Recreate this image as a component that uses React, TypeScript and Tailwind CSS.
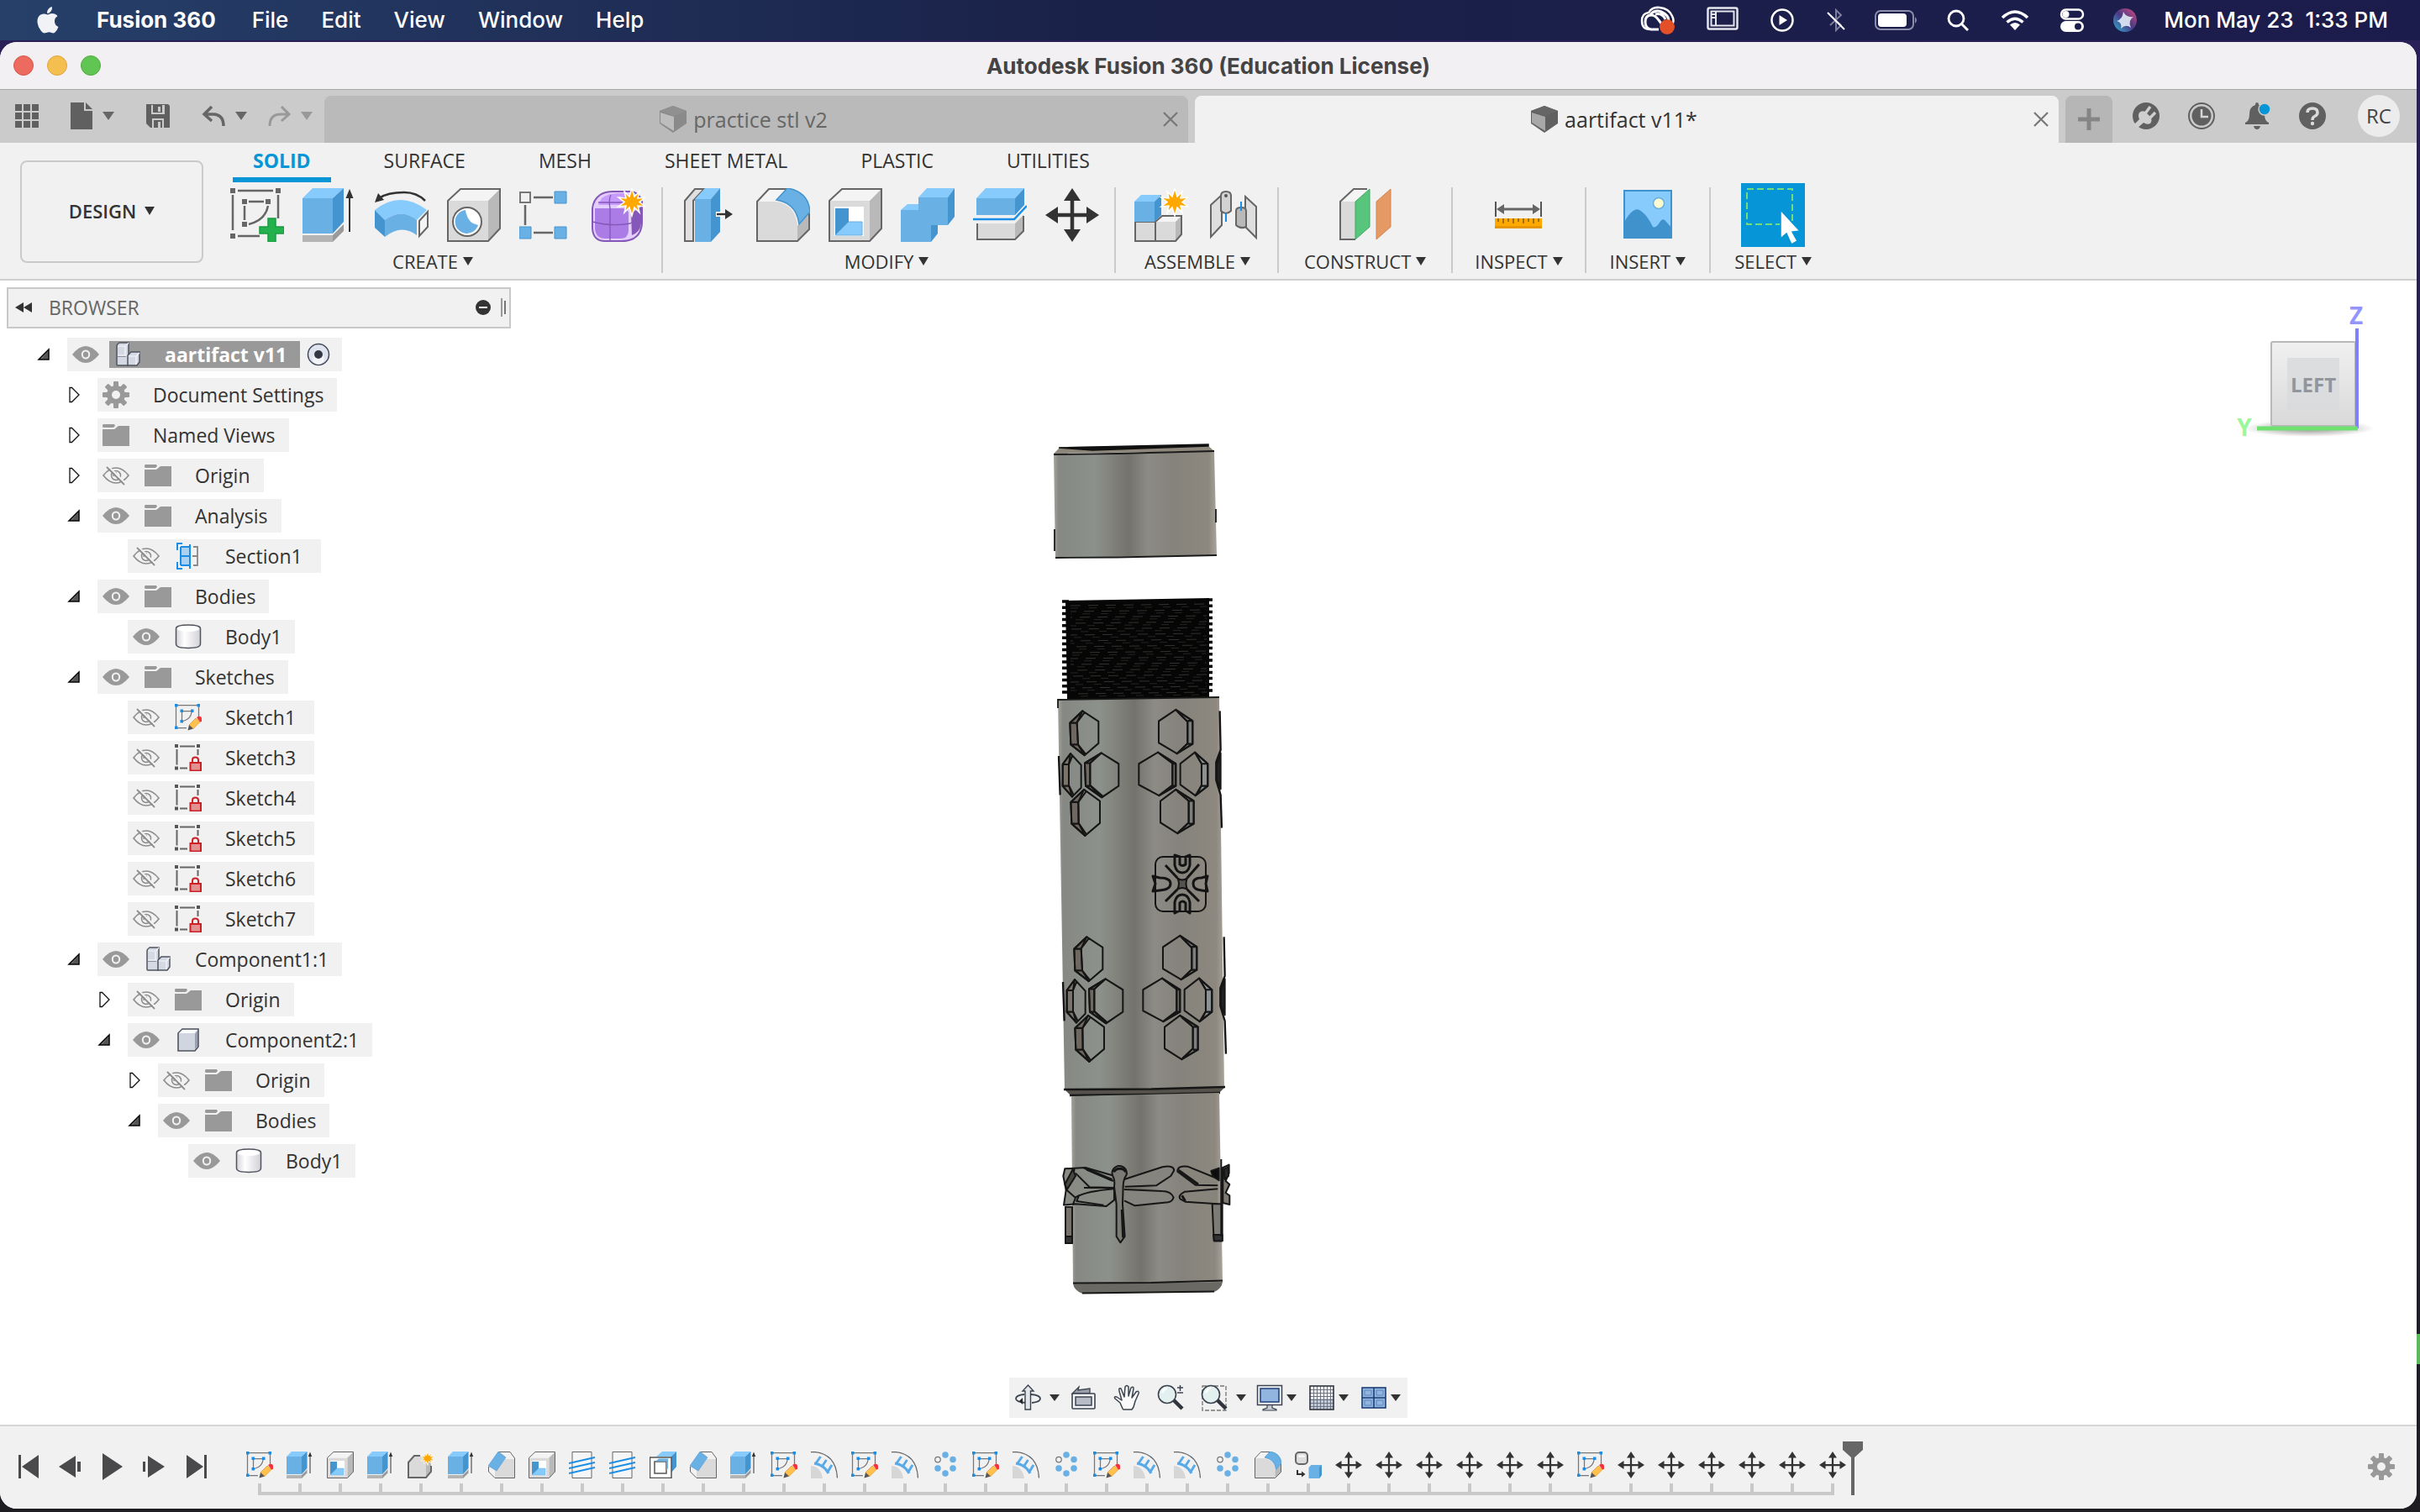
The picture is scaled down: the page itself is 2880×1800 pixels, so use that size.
import React from "react";

type P = { className?: string };
type IconFn = (p: P) => React.ReactElement;

const BL = "#87cafc";
const BM = "#69b0e4";
const BD = "#4494cf";
const GF = "#dadada";
const GT = "#f4f4f4";
const GS = "#b9b9b9";
const GK = "#666666";

function Svg({ vb = "0 0 64 64", className = "size-16", children }: { vb?: string; className?: string; children: React.ReactNode }) {
  return (
    <svg viewBox={vb} className={`${className} block shrink-0`} fill="none" aria-hidden="true">
      {children}
    </svg>
  );
}

function Caret({ className = "h-2.5 w-3 text-[#333]" }: P) {
  return (
    <svg viewBox="0 0 12 10" className={`${className} block shrink-0`} preserveAspectRatio="none" aria-hidden="true">
      <path d="M0 0H12L6 10Z" fill="currentColor" />
    </svg>
  );
}

const STAR = "M48 0 51 10 57 4 55 12 64 11 57 16.500 64 22 55 21 57 29 51 23 48 33 45 23 39 29 41 21 32 22 39 16.500 32 11 41 12 39 4 45 10Z";
const Star = () => <path d={STAR} fill="#ffa800" stroke="#fff" strokeWidth="1.500" />;

/* ---------- modelling icons, drawn on a 64 unit grid ---------- */

const NewSketch: IconFn = ({ className }) => (
  <Svg className={className}>
    <g fill="#666">
      <path d="M0 0h6v6H0zM54 0h6v6h-6zM0 54h6v6H0zM14 13h6v6h-6zM42 13h6v6h-6zM14 40h6v6h-6z" />
    </g>
    <path d="M9 3H51M3 8V50M57 8V36M9 57H35M22 16H40M17 21V38M45 21Q42 38 22 43" stroke="#666" strokeWidth="2.500" />
    <path d="M45 36h9v10h10v8H54v10h-9V54H35v-8h10z" fill="#22b14c" stroke="#1a9a40" strokeWidth="1.500" />
  </Svg>
);

const Extrude: IconFn = ({ className }) => (
  <Svg className={className}>
    <path d="M0 12H36V54H0Z" fill={BM} />
    <path d="M0 12 12 0H49L36 12Z" fill={BL} />
    <path d="M36 12 49 0V40L36 54Z" fill={BD} />
    <path d="M0 56H36V64H0Z" fill="#b4b4b4" />
    <path d="M36 56 49 43V51L36 64Z" fill="#9a9a9a" />
    <path d="M56 8V52" stroke="#333" strokeWidth="2" />
    <path d="M56 1 60.500 12H51.500Z" fill="#333" />
  </Svg>
);

const Revolve: IconFn = ({ className }) => (
  <Svg className={className}>
    <path d="M60 15Q50 5 35 5Q15 5 5 12" stroke="#333" strokeWidth="2.500" />
    <path d="M0 17 4 6 11 14Z" fill="#333" />
    <path d="M0 26Q30 2 62 26L50 38Q32 23 12 38Z" fill={BL} />
    <path d="M0 26 12 38V58L0 47Z" fill={BD} />
    <path d="M12 38Q32 23 50 38V56Q32 42 12 58Z" fill={BM} />
    <path d="M53 39 63 28V46L53 57Z" fill="#f4f4f4" stroke={GK} strokeWidth="2" />
  </Svg>
);

const Box = () => (
  <>
    <path d="M1 15H49V63H1Z" fill={GF} />
    <path d="M1 15 16 1H63L49 15Z" fill={GT} />
    <path d="M49 15 63 1V48L49 63Z" fill={GS} />
    <path d="M1 15 16 1H63V48L49 63H1Z" stroke={GK} strokeWidth="2" />
  </>
);

const Hole: IconFn = ({ className }) => (
  <Svg className={className}>
    <Box />
    <circle cx="24" cy="40" r="17" fill="#fff" stroke={GK} strokeWidth="2" />
    <path d="M22 26A14 14 0 1 0 37 44Q24 42 22 26Z" fill={BM} />
  </Svg>
);

const Pattern: IconFn = ({ className }) => (
  <Svg vb="4 0 64 64" className={className}>
    <path d="M5 5H17V17H5Z" stroke="#777" strokeWidth="2" />
    <path d="M46 4h14v14H46zM4 46h14v14H4zM46 46h14v14H46z" fill={BM} stroke={BD} strokeWidth="1" />
    <path d="M21 11H44M21 53H44M11 20V44" stroke="#666" strokeWidth="2.500" />
  </Svg>
);

const FormTool: IconFn = ({ className }) => (
  <Svg className={className}>
    <path d="M1 24Q2 14 10 8Q16 4 26 4H46Q56 4 60 16L60 40Q60 54 50 60Q44 63 36 63H16Q2 63 1 48Z" fill="#e3cdfb" stroke="#8457b8" strokeWidth="2" />
    <path d="M12 12Q20 5 38 6L50 9 44 20H8Z" fill="#c79bfb" />
    <path d="M4 24H38Q44 24 44 32V50Q44 60 34 60H16Q5 60 4 48Z" fill="#ab7be6" />
    <path d="M47 30 59 22V42Q58 52 48 56Z" fill="#8457b8" />
    <path d="M23 8Q20 14 22 24V62M1 40Q24 46 46 42L60 34M8 17H48" stroke="#8457b8" strokeWidth="1.300" />
    <Star />
  </Svg>
);

const PressPull: IconFn = ({ className }) => (
  <Svg className={className}>
    <path d="M1 15 13 1H24L11 15V63H1Z" fill="#e0e0e0" stroke={GK} strokeWidth="2" />
    <path d="M13 13H32V64H13Z" fill={BM} />
    <path d="M13 13 25 0H43L32 13Z" fill={BL} />
    <path d="M32 13 43 0V52L32 64Z" fill={BD} />
    <path d="M38 31H49" stroke="#fff" strokeWidth="6" />
    <path d="M39 31H50" stroke="#333" strokeWidth="2.500" />
    <path d="M49 25 58 31 49 37Z" fill="#333" />
  </Svg>
);

const Fillet: IconFn = ({ className }) => (
  <Svg className={className}>
    <path d="M1 16H22Q46 18 49 45V63H1Z" fill={GF} />
    <path d="M1 16 15 1H37L24 16Z" fill={GT} />
    <path d="M49 45 63 30V49L49 63Z" fill={GS} />
    <path d="M37 1H15L1 16V63H49L63 49V30" stroke={GK} strokeWidth="2" />
    <path d="M37 0Q62 4 64 28L51 43Q48 18 24 14Z" fill={BM} stroke={BD} strokeWidth="1.500" />
  </Svg>
);

const Shell: IconFn = ({ className }) => (
  <Svg className={className}>
    <Box />
    <path d="M7 22H42V57H7Z" fill="#fff" />
    <path d="M8 24H24V42L8 56Z" fill={BD} />
    <path d="M24 40H40V56H8Z" fill={BL} stroke={BM} strokeWidth="1" />
  </Svg>
);

const Combine: IconFn = ({ className }) => (
  <Svg className={className}>
    <path d="M0 26H21V11H56V44H36V64H0Z" fill={BM} />
    <path d="M21 11 31 0H64L56 11ZM0 26 8 19H21V26Z" fill={BL} />
    <path d="M56 11 64 0V34L56 44ZM36 64V44H44V54Z" fill={BD} />
  </Svg>
);

const Split: IconFn = ({ className }) => (
  <Svg className={className}>
    <path d="M4 12H50V32H4Z" fill={BM} />
    <path d="M4 12 15 0H61L50 12Z" fill={BL} />
    <path d="M50 12 61 0V20L50 32Z" fill={BD} />
    <path d="M0 37H49L64 21" stroke="#1a8ee6" strokeWidth="2.500" />
    <path d="M5 42H50V61H5Z" fill={GF} />
    <path d="M50 42 60 32V51L50 61Z" fill={GS} />
    <path d="M5 42V61H50L60 51V33" stroke={GK} strokeWidth="2" />
  </Svg>
);

const Move: IconFn = ({ className }) => (
  <Svg className={className}>
    <path d="M32 10V54M10 32H54" stroke="#333" strokeWidth="4.500" />
    <path d="M32 0 42 15H22ZM32 64 42 49H22ZM0 32 15 22V42ZM64 32 49 22V42Z" fill="#333" />
  </Svg>
);

const NewComponent: IconFn = ({ className }) => (
  <Svg className={className}>
    <path d="M1 40H25V63H1Z" fill={GF} stroke={GK} strokeWidth="2" />
    <path d="M25 40 33 33H56L49 40Z" fill={GT} />
    <path d="M25 40H49V63H25Z" fill={GF} />
    <path d="M49 40 56 33V55L49 63Z" fill={GS} />
    <path d="M25 40 33 33H56V55L49 63H25Z" stroke={GK} strokeWidth="2" />
    <path d="M0 16H24V40H0Z" fill={BM} />
    <path d="M0 16 8 8H32L24 16Z" fill={BL} />
    <path d="M24 16 32 8V32L24 40Z" fill={BD} />
    <Star />
  </Svg>
);

const Joint: IconFn = ({ className }) => (
  <Svg className={className}>
    <path d="M5 20 18 8V44L5 58Z" fill="#dedede" stroke={GK} strokeWidth="2" />
    <path d="M17 9Q17 4 23 4T29 9V27Q26 30 23 30T17 27Z" fill="#d2d2d2" stroke={GK} strokeWidth="2" />
    <circle cx="23" cy="9" r="2" fill="#555" />
    <path d="M23 30V40M41 16V26" stroke="#1a8ee6" strokeWidth="2" />
    <path d="M46 10 59 22V59L46 46Z" fill="#dedede" stroke={GK} strokeWidth="2" />
    <path d="M35 27Q35 23 41 23T47 27V46Q40 49 35 44Z" fill="#b9b9b9" stroke={GK} strokeWidth="2" />
    <path d="M41 16V27" stroke="#1a8ee6" strokeWidth="2" />
  </Svg>
);

const Construct: IconFn = ({ className }) => (
  <Svg className={className}>
    <path d="M2 16H20V61H2Z" fill={GF} />
    <path d="M2 16 18 1H37L20 16Z" fill={GT} />
    <path d="M34 1H18L2 16V61H20" stroke={GK} strokeWidth="2" />
    <path d="M20 16 37 1V46L20 61Z" fill="#57c67c" stroke="#3da862" strokeWidth="1" />
    <path d="M45 16 62 1V46L45 61Z" fill="#e59a66" stroke="#d2844e" strokeWidth="1" />
  </Svg>
);

const Measure: IconFn = ({ className }) => (
  <Svg className={className}>
    <path d="M5 16V34M59 16V34" stroke="#555" strokeWidth="2" />
    <path d="M10 25H54" stroke="#666" strokeWidth="3" />
    <path d="M6 25 15 19V31ZM58 25 49 19V31Z" fill="#666" />
    <path d="M4 36H60V48H4Z" fill="#ffa800" />
    <path d="M4 45H60V48H4Z" fill="#e59600" />
    <path d="M8 36v4M14 36v6M20 36v4M26 36v6M32 36v4M38 36v6M44 36v4M50 36v6M56 36v4" stroke="#6b5320" strokeWidth="1.300" />
  </Svg>
);

const InsertPic: IconFn = ({ className }) => (
  <Svg className={className}>
    <path d="M3 2H61V60H3Z" fill={BL} />
    <path d="M3 42Q14 22 22 26T38 46Q42 48 46 41T54 40L61 48V60H3Z" fill="#3f92cc" />
    <circle cx="45" cy="18" r="6.500" fill="#fffbd0" stroke="#6aaede" strokeWidth="1.500" />
    <path d="M4 3H60V59H4Z" stroke="#3f92cc" strokeWidth="2" />
  </Svg>
);

const SelectTool: IconFn = () => (
  <Svg vb="0 0 76 76" className="-my-1.5 size-[76px]">
    <path d="M0 0H76V76H0Z" fill="#0696d7" />
    <path d="M7 7H61V49H7Z" stroke="#73dd7b" strokeWidth="2" strokeDasharray="8 4" />
    <path d="M47 32 70 57 61 58 67 69 60 73 54 60 47 66Z" fill="#fff" stroke="#0696d7" strokeWidth="1.500" />
  </Svg>
);

/* ---------- timeline only icons ---------- */

const SketchEdit: IconFn = ({ className }) => (
  <Svg className={className}>
    <path d="M3 3H57M3 3V57M57 3V34M3 57H28M17 17H41M17 17V41M40 20Q38 36 20 41" stroke="#777" strokeWidth="2.500" />
    <path d="M0 0h7v7H0zM53 0h7v7h-7zM0 53h7v7H0zM13 13h7v7h-7zM38 13h7v7h-7zM13 38h7v7h-7z" fill="#1a8ee6" />
    <path d="M34 50 50 34 60 43 44 59Z" fill="#ffc04d" stroke="#d99a2b" strokeWidth="1.500" />
    <path d="M34 50 44 59 31 63Z" fill="#555" />
    <path d="M52 32Q62 26 64 34T60 43Z" fill="#f5323c" />
  </Svg>
);

const SketchLocked: IconFn = ({ className }) => (
  <Svg className={className}>
    <path d="M0 0h8v8H0zM52 0h8v8h-8zM0 53h8v8H0z" fill="#555" />
    <path d="M12 5H48M5 12V49M55 12V26M12 57H30" stroke="#666" strokeWidth="4" />
    <path d="M42 43V37Q42 31 49 31T56 37V43" stroke="#cc2026" strokeWidth="4" />
    <path d="M37 44H62V63H37Z" fill="#e39091" stroke="#cc2026" strokeWidth="4" />
  </Svg>
);

const BaseFeature: IconFn = ({ className }) => (
  <Svg className={className}>
    <path d="M2 26 16 10H46L56 22V48L44 62H2Z" fill={GF} />
    <path d="M44 30 56 20V48L44 62Z" fill={GS} />
    <path d="M30 10H16L2 26V62H44L56 48V34" stroke={GK} strokeWidth="4" />
    <Star />
  </Svg>
);

const Chamfer: IconFn = ({ className }) => (
  <Svg className={className}>
    <path d="M1 36V48L16 63H63V16L52 1H26" fill="#f2f2f2" stroke={GK} strokeWidth="2" />
    <path d="M40 18H62V62H16V44Z" fill={GF} />
    <path d="M24 0 42 14 20 46 0 34Z" fill={BM} stroke={BD} strokeWidth="1" />
  </Svg>
);

const Thread: IconFn = ({ className }) => (
  <Svg className={className}>
    <path d="M8 1H54V63H8Z" fill="#f6f6f6" stroke={GK} strokeWidth="2" />
    <path d="M0 28 62 14M0 40 62 26M0 52 62 38" stroke="#1a8ee6" strokeWidth="4" />
  </Svg>
);

const Scale: IconFn = ({ className }) => (
  <Svg className={className}>
    <path d="M16 12 30 0H64L54 12Z" fill={BL} />
    <path d="M52 12 64 0V36L52 50Z" fill={BD} />
    <path d="M1 14H52V63H1Z" fill="#fff" stroke="#555" strokeWidth="3" />
    <path d="M12 24H40V52H12Z" fill="#fff" stroke="#555" strokeWidth="3" />
    <path d="M14 23 22 17H44V40L40 46V24Z" fill={BM} />
  </Svg>
);

const Emboss: IconFn = ({ className }) => (
  <Svg className={className}>
    <path d="M0 1H8Q60 6 63 63" stroke="#666" strokeWidth="2.500" />
    <path d="M0 34Q24 36 28 64H0Z" fill="#d6d6d6" />
    <path d="M8 28Q32 32 42 52M10 31 23 12M25 38 37 20M39 50 50 32" stroke="#5aaae8" strokeWidth="6" />
  </Svg>
);

const CircPattern: IconFn = ({ className }) => (
  <Svg className={className}>
    <g fill={BM}>
      <circle cx="32" cy="8" r="7.500" />
      <circle cx="50" cy="19" r="7.500" />
      <circle cx="50" cy="40" r="7.500" />
      <circle cx="32" cy="52" r="7.500" />
      <circle cx="14" cy="40" r="7.500" />
    </g>
    <circle cx="14" cy="19" r="6.500" stroke="#777" strokeWidth="2.500" />
  </Svg>
);

const Convert: IconFn = ({ className }) => (
  <Svg className={className}>
    <rect x="2" y="2" width="28" height="28" rx="8" fill="#ddd" stroke="#666" strokeWidth="4" />
    <path d="M8 11H24" stroke="#f8f8f8" strokeWidth="5" />
    <path d="M6 44V54H18" stroke="#333" strokeWidth="4" />
    <path d="M16 47 25 54 16 61Z" fill="#333" />
    <path d="M33 38 39 32H64V56L58 64H33Z" fill={BM} />
    <path d="M58 38 64 32V56L58 64Z" fill={BD} />
  </Svg>
);

/* ---------- browser tree icons (32 unit grid) ---------- */

const Eye: IconFn = () => (
  <Svg vb="0 0 32 32" className="size-8">
    <path d="M0 16Q8 6 16 6T32 16Q24 26 16 26T0 16Z" fill="#999" />
    <ellipse cx="16" cy="16" rx="4.200" ry="4.600" stroke="#f2f2f2" strokeWidth="2" />
  </Svg>
);
const EyeOff: IconFn = () => (
  <Svg vb="0 0 32 32" className="size-8">
    <path d="M1 16Q8 7 16 7T31 16Q24 25 16 25T1 16Z" stroke="#8c8c8c" strokeWidth="1.600" />
    <circle cx="16" cy="16" r="5.500" stroke="#8c8c8c" strokeWidth="1.500" />
    <path d="M13 17Q13 13 17 13" stroke="#8c8c8c" strokeWidth="1.500" />
    <path d="M7 5 28 26" stroke="#f2f2f2" strokeWidth="2" />
    <path d="M5 6 26 27" stroke="#8c8c8c" strokeWidth="1.800" />
  </Svg>
);
const Folder: IconFn = () => (
  <Svg vb="0 0 32 32" className="size-8">
    <path d="M1 3H14L15 5 13 7H1Q0 7 0 5T1 3Z" fill="#999" />
    <path d="M0 9H14L19 5H32V29H0Z" fill="#999" />
  </Svg>
);
function Gear({ className = "size-8 text-[#999]" }: P) {
  return (
    <Svg vb="0 0 32 32" className={className}>
      <g fill="currentColor">
        {[0, 45, 90, 135].map((a) => (
          <rect key={a} x="13" y="0" width="6" height="32" rx="1" transform={`rotate(${a} 16 16)`} />
        ))}
      </g>
      <circle cx="16" cy="16" r="8" stroke="currentColor" strokeWidth="6" />
      <circle cx="16" cy="16" r="5" fill="#f2f2f2" />
    </Svg>
  );
}
const Assembly: IconFn = () => (
  <Svg vb="0 0 32 32" className="size-8">
    <path d="M3 6Q3 4 6 2H17V27Q17 29 16 29H4Q3 29 3 28Z" fill="#d5d9e3" stroke="#50545f" strokeWidth="1.500" />
    <path d="M16 17 20 13H30V25L27 29H16Z" fill="#d5d9e3" stroke="#50545f" strokeWidth="1.500" />
    <path d="M4 6H13V17M4 17H15M14 6 17 2M17 18H26V28M26 18 30 14" stroke="#f7f8fb" strokeWidth="1.200" />
    <path d="M4 18.500H14" stroke="#8a90a0" strokeWidth="1" />
  </Svg>
);
const Cube: IconFn = () => (
  <Svg vb="0 0 32 32" className="size-8">
    <path d="M4 8 9 3H28V24L24 29H4Z" fill="#d1d5df" stroke="#50545f" strokeWidth="1.600" />
    <path d="M5 8H23L27 4H9Z" fill="#fafbfd" />
    <path d="M24 9 27 5V24L24 27Z" fill="#9aa0b0" />
  </Svg>
);
const Body: IconFn = () => (
  <Svg vb="0 0 32 32" className="size-8">
    <defs>
      <linearGradient id="cyl" x1="0" x2="1">
        <stop offset="0" stopColor="#d5d5d9" />
        <stop offset="0.350" stopColor="#ffffff" />
        <stop offset="1" stopColor="#d0d0d6" />
      </linearGradient>
    </defs>
    <path d="M1.500 6Q2 2 16 2T30.500 6V25Q30 29.500 16 29.500T1.500 25Z" fill="url(#cyl)" stroke="#50545f" strokeWidth="1.500" />
    <path d="M2.500 7Q3 3 16 3T29.500 7Q26 10 16 10T2.500 7Z" fill="#fff" />
  </Svg>
);
const Section: IconFn = () => (
  <Svg vb="0 0 32 32" className="size-8">
    <path d="M6 5H17V27H6Z" fill="#a9d1f2" />
    <path d="M18 2V31M7 5V27M7 5H18M7 16H18M7 27H18" stroke="#1a8ee6" strokeWidth="2" />
    <path d="M3 9V1H9M3 23V31H9" stroke="#1a8ee6" strokeWidth="2" />
    <path d="M22 5H27V27H22M21 16H27" stroke="#888" strokeWidth="1.800" />
  </Svg>
);
const Sk32: IconFn = () => <SketchEdit className="size-8" />;
const Lock32: IconFn = () => <SketchLocked className="size-8" />;

type Row = { lvl: 0 | 1 | 2 | 3 | 4; tw?: "open" | "shut"; eye?: "on" | "off"; roomy?: boolean; Icon: IconFn; text: string };

const G32: IconFn = () => <Gear />;

const ROWS: Row[] = [
  { lvl: 1, tw: "shut", Icon: G32, text: "Document Settings" },
  { lvl: 1, tw: "shut", Icon: Folder, text: "Named Views" },
  { lvl: 1, tw: "shut", eye: "off", Icon: Folder, text: "Origin" },
  { lvl: 1, tw: "open", eye: "on", Icon: Folder, text: "Analysis" },
  { lvl: 2, eye: "off", roomy: true, Icon: Section, text: "Section1" },
  { lvl: 1, tw: "open", eye: "on", Icon: Folder, text: "Bodies" },
  { lvl: 2, eye: "on", Icon: Body, text: "Body1" },
  { lvl: 1, tw: "open", eye: "on", Icon: Folder, text: "Sketches" },
  { lvl: 2, eye: "off", roomy: true, Icon: Sk32, text: "Sketch1" },
  { lvl: 2, eye: "off", roomy: true, Icon: Lock32, text: "Sketch3" },
  { lvl: 2, eye: "off", roomy: true, Icon: Lock32, text: "Sketch4" },
  { lvl: 2, eye: "off", roomy: true, Icon: Lock32, text: "Sketch5" },
  { lvl: 2, eye: "off", roomy: true, Icon: Lock32, text: "Sketch6" },
  { lvl: 2, eye: "off", roomy: true, Icon: Lock32, text: "Sketch7" },
  { lvl: 1, tw: "open", eye: "on", Icon: Assembly, text: "Component1:1" },
  { lvl: 2, tw: "shut", eye: "off", Icon: Folder, text: "Origin" },
  { lvl: 2, tw: "open", eye: "on", Icon: Cube, text: "Component2:1" },
  { lvl: 3, tw: "shut", eye: "off", Icon: Folder, text: "Origin" },
  { lvl: 3, tw: "open", eye: "on", Icon: Folder, text: "Bodies" },
  { lvl: 4, eye: "on", Icon: Body, text: "Body1" },
];

const INDENT = ["pl-9", "pl-18", "pl-27", "pl-36", "pl-45"];

function Twisty({ state }: { state?: "open" | "shut" }) {
  if (!state) return <span className="w-4 shrink-0" />;
  return (
    <button aria-label={state === "open" ? "Collapse" : "Expand"} className="w-4 shrink-0">
      {state === "open" ? (
        <Svg vb="0 0 16 20" className="h-5 w-4">
          <path d="M2 16 14 4V16Z" fill="#777" stroke="#000" strokeWidth="1.500" />
          <path d="M13 6V15H6Z" fill="#555" />
        </Svg>
      ) : (
        <Svg vb="0 0 16 20" className="h-5 w-4">
          <path d="M3 1.500H5.500L14 10 5.500 18.500H3Z" fill="#fff" stroke="#111" strokeWidth="1.300" />
        </Svg>
      )}
    </button>
  );
}

function Browser() {
  return (
    <section aria-label="Browser" className="absolute top-2 left-2 w-150 text-[23px] leading-8 text-[#333]">
      <header className="flex h-[49px] items-center border-2 border-[#c8c8c8] bg-[#f1f1f1] pr-1 pb-0.5 pl-2">
        <button aria-label="Collapse panel">
          <Svg vb="0 0 20 12" className="h-3 w-5">
            <path d="M0 6 10 0V12ZM10 6 20 0V12Z" fill="#333" />
          </Svg>
        </button>
        <h2 className="ml-5 flex-1 text-[#666]">BROWSER</h2>
        <button aria-label="Hide" className="mr-3">
          <Svg vb="0 0 18 18" className="size-[18px]">
            <circle cx="9" cy="9" r="9" fill="#333" />
            <path d="M4 9H14" stroke="#fff" strokeWidth="2" />
          </Svg>
        </button>
        <span className="flex items-center gap-0.5">
          <i className="h-[22px] w-0.5 bg-[#999]" />
          <i className="h-4 w-0.5 bg-[#777]" />
        </span>
      </header>
      <ul className="mt-[11px] flex flex-col gap-2">
        <li className="flex items-center gap-5 pl-9">
          <Twisty state="open" />
          <div className="flex h-10 items-center bg-[#f1f1f1] pr-3 pl-1.5">
            <button aria-label="Toggle visibility">
              <Eye />
            </button>
            <div className="ml-3 flex items-center gap-7 bg-[#999] pr-4 pl-1.5 font-bold text-white">
              <Assembly />
              <span>aartifact v11</span>
            </div>
            <label className="ml-1.5 block">
              <input type="radio" name="active" defaultChecked aria-label="Activate component" className="peer sr-only" />
              <Svg vb="0 0 32 32" className="size-8">
                <circle cx="16" cy="16" r="12.500" fill="#dfe3ee" stroke="#444b5a" strokeWidth="1.500" />
                <circle cx="16" cy="21" r="7" fill="#fff" opacity="0.600" />
                <circle cx="16" cy="16" r="5" fill="#333844" />
              </Svg>
            </label>
          </div>
        </li>
        {ROWS.map((r, i) => (
          <li key={i} className={`flex items-center gap-5 ${INDENT[r.lvl]}`}>
            <Twisty state={r.tw} />
            <div className={`flex h-10 items-center bg-[#f1f1f1] pl-1.5 ${r.roomy ? "pr-[22px]" : "pr-4"}`}>
              {r.eye && (
                <button aria-label="Toggle visibility" className="mr-[18px]">
                  {r.eye === "on" ? <Eye /> : <EyeOff />}
                </button>
              )}
              <r.Icon />
              <span className="ml-7">{r.text}</span>
            </div>
          </li>
        ))}
      </ul>
    </section>
  );
}

/* ---------- 3D model ---------- */

const leftHex = "M325 970 382 1005V1078L332 1118 283 1082 280 1010ZM333 974 305 1008 309 1082 336 1114M280 1010H305M283 1082H309";
const rightHex = "M658 966 718 1003V1080L662 1112 597 1076V1004ZM664 972 700 1006V1078L668 1108M718 1003H700M716 1080H700";
const midL = "M392 1110 454 1146V1220L394 1258 336 1220 333 1144ZM386 1114 352 1144V1218L398 1255M333 1144H352M336 1220H352";
const midR = "M594 1108 658 1146V1220L598 1252 526 1216V1146ZM600 1112 646 1144V1218L600 1250M658 1146H646M656 1220H646";
const edgeL = "M282 1112 320 1150V1226L288 1256 254 1220V1148ZM290 1116 276 1148V1218L294 1252M254 1148H276M254 1220H276";
const edgeR = "M726 1108 772 1146V1220L728 1252 674 1216V1146ZM730 1114 750 1146V1218L734 1248M772 1146H750M772 1220H750";

function HexGroup() {
  return (
    <g stroke="#151515" strokeWidth="6" strokeLinejoin="round">
      <path d="M325 970 280 1010 283 1082 332 1118 309 1082 305 1008Z" fill="#6e6860" />
      <path d="M392 1110 333 1144 336 1220 394 1258 352 1218V1144Z" fill="#6e6860" />
      <path d="M282 1112 254 1148V1220L288 1256 276 1218V1148Z" fill="#7a746b" />
      <path d="M658 966 718 1003V1080L662 1112 700 1078V1006Z" fill="#7d7f7c" />
      <path d="M594 1108 658 1146V1220L598 1252 646 1218V1144Z" fill="#6a6b68" />
      <path d="M726 1108 772 1146V1220L728 1252 750 1218V1146Z" fill="#8c9292" />
      <path d="M330 1232 283 1274 286 1346 334 1386 311 1344 310 1274Z" fill="#6e6860" />
      <path d="M658 1232 722 1270V1346L664 1378 704 1342V1270Z" fill="#7d7f7c" />
      <path d={`${leftHex}${rightHex}${midL}${midR}${edgeL}${edgeR}`} />
      <path d="M330 1232 387 1270V1344L334 1386 286 1346 283 1274ZM338 1238 310 1274 311 1344 338 1380M283 1274H310M286 1346H311" />
      <path d="M658 1232 722 1270V1346L664 1378 603 1342V1270ZM664 1238 704 1270V1342L668 1374M722 1270H704M722 1346H704" />
      <path d="M240 1120 245 1250M815 970 818 1100 802 1140V1200L818 1250 822 1360" strokeWidth="7" />
      <path d="M818 1110 804 1150V1200L818 1230Z" fill="#222" />
    </g>
  );
}

const teeth = Array.from({ length: 16 }, (_, i) => i);

function Model() {
  return (
    <svg viewBox="0 0 340 1060" className="absolute top-[166px] left-[1180px] h-[1060px] w-[340px]" fill="none" role="img" aria-label="aartifact model">
      <defs>
        <linearGradient id="metal" x1="0" x2="1">
          <stop offset="0" stopColor="#a3a39b" />
          <stop offset="0.030" stopColor="#868983" />
          <stop offset="0.250" stopColor="#8d918b" />
          <stop offset="0.330" stopColor="#84867f" />
          <stop offset="0.460" stopColor="#74726c" />
          <stop offset="0.580" stopColor="#8d8b85" />
          <stop offset="0.720" stopColor="#85837c" />
          <stop offset="0.950" stopColor="#8d887f" />
          <stop offset="1" stopColor="#a9a49a" />
        </linearGradient>
      </defs>
      {/* cap */}
      <path d="M74 40 82 32 257 30 265 37Z" fill="#8d867a" />
      <path d="M80 33 258 29V31L120 36Z" fill="#111" stroke="#111" strokeWidth="1.500" />
      <path d="M74 41 265 37 268 161 76 164Z" fill="url(#metal)" />
      <path d="M74 41 150 40 265 37M76 164 150 163.500 268 161M75 130V156M267 106V122" stroke="#1a1a1a" strokeWidth="1.800" />
      {/* threaded neck */}
      <path d="M88 215 259 212V331L90 333Z" fill="#060606" />
      {teeth.map((i) => (
        <g key={i}>
          <path d={`M84 ${216 + i * 7.2}H92M256 ${214 + i * 7.2}H263`} stroke="#060606" strokeWidth="3.500" />
          <path d={`M94 ${221 + i * 7}L256 ${219 + i * 7}`} stroke="#34322e" strokeWidth="1" strokeDasharray="12 9" strokeDashoffset={i * 5} />
          <path d={`M94 ${224 + i * 7}L256 ${222 + i * 7}`} stroke="#26241f" strokeWidth="1" strokeDasharray="9 13" strokeDashoffset={i * 8} />
        </g>
      ))}
      {/* main barrel */}
      <path d="M79 333 271 330 277 795 87 797Z" fill="url(#metal)" />
      <path d="M79 343V333L271 330" stroke="#1a1a1a" strokeWidth="1.800" />
      <g transform="scale(0.3333 0.3571)">
        <HexGroup />
      </g>
      <g transform="translate(5 269) scale(0.3333 0.3571)">
        <HexGroup />
      </g>
      {/* emblem */}
      <g stroke="#141414" strokeWidth="2" strokeLinejoin="round">
        <rect x="195" y="520" width="60" height="65" rx="9" />
        <path d="M207 530 221 545M247 529 233 545M207 573 221 559M247 573 233 559" strokeWidth="3" />
        <path d="M221 545Q227 550 233 545Q230 552 233 559Q227 555 221 559Q225 552 221 545Z" fill="#55534e" />
        <path d="M218 518V530Q220 539 227 539T236 530V518L231 520V529Q227 532 224 529V520ZM218 587V574Q220 565 227 565T236 574V587L231 584V575Q227 571 224 575V584ZM192 543 200 545Q213 545 213 552T200 560L192 561 195 552ZM257 543 250 545Q240 545 240 552T250 560L257 561 255 552Z" strokeWidth="3" />
      </g>
      {/* lower barrel */}
      <path d="M87 797 277 795 271 801 95 805Z" fill="#55524c" />
      <path d="M86 797 190 796.500 278 794M93 804 190 803 272 801" stroke="#161616" strokeWidth="2.500" />
      <path d="M95 805 271 801 275 1026 97 1028Z" fill="url(#metal)" />
      <path d="M97 1028 275 1026Q274 1034 265 1038L108 1040Q98 1036 97 1028Z" fill="#6b6963" />
      <path d="M97 1027.500 190 1027 275 1024.500M108 1039.500 265 1037.500" stroke="#161616" strokeWidth="2.200" />
      {/* dragonflies */}
      <g transform="translate(0 540) scale(0.3333)" stroke="#161616" strokeWidth="6" strokeLinejoin="round">
        <path d="M264 1190H288V1320H264Z" fill="#77736b" />
        <path d="M264 1296H288V1320H264Z" fill="#333" />
        <path d="M432 1078 335 1050 262 1054 256 1080 266 1130 258 1184 300 1180 410 1188 438 1166V1122L350 1120 300 1070" fill="#898b85" />
        <path d="M435 1098 330 1052M330 1122H440M296 1054 290 1090 266 1128 300 1158 290 1184M300 1156Q340 1134 438 1126M312 1150 304 1170 400 1184" />
        <path d="M290 1056 300 1080 270 1128 262 1110Z" fill="#4a4741" />
        <path d="M340 1056 430 1094" strokeWidth="10" />
        <path d="M474 1092 610 1048Q650 1040 652 1060L640 1080 588 1114 476 1118M474 1128 610 1134Q640 1134 650 1156 646 1172 630 1174L512 1186 474 1168" fill="#85847e" />
        <path d="M432 1078A26 26 0 1 1 482 1076Q470 1092 470 1118L468 1180 476 1296 460 1318 446 1296V1180L438 1118Q442 1096 432 1078Z" fill="#7c7a74" />
        <path d="M436 1066A26 26 0 0 1 480 1066M466 1200 470 1300" strokeWidth="9" />
        <path d="M808 1090 700 1046Q664 1042 664 1064L728 1112 808 1114M808 1126 690 1136Q664 1150 674 1162L692 1172 808 1180" fill="#87847c" />
        <path d="M668 1060 738 1110M680 1150 692 1170" strokeWidth="9" />
        <path d="M788 1180H824V1312H794Z" fill="#7d7b75" />
        <path d="M792 1290H824V1312H796Z" fill="#333" />
        <path d="M784 1062 812 1052V1096L790 1080Z" fill="#0c0c0c" />
        <path d="M820 1020V1296M826 1050 848 1040V1070L836 1098 850 1110 836 1140 850 1150V1182L826 1176Z" fill="#7d7a72" />
        <path d="M830 1056 846 1048V1080L832 1092Z" fill="#2a2a28" />
      </g>
    </svg>
  );
}

function ViewCube() {
  return (
    <svg viewBox="0 0 180 180" className="absolute top-5 right-[46px] size-[180px]" fill="none" role="img" aria-label="View cube, left face">
      <defs>
        <linearGradient id="face" x1="0" x2="0" y1="0" y2="1">
          <stop offset="0" stopColor="#f0f0f0" />
          <stop offset="1" stopColor="#d9d9d9" />
        </linearGradient>
        <radialGradient id="shade">
          <stop offset="0" stopColor="#000" stopOpacity="0.450" />
          <stop offset="1" stopColor="#000" stopOpacity="0" />
        </radialGradient>
      </defs>
      <ellipse cx="98" cy="156" rx="78" ry="10" fill="url(#shade)" />
      <rect x="53" y="53" width="100" height="100" rx="2" fill="url(#face)" stroke="#b9b9b9" strokeWidth="2" />
      <rect x="72" y="72" width="62" height="62" fill="#d8dadd" opacity="0.850" />
      <text x="103" y="113" textAnchor="middle" fontSize="24" fontWeight="700" fill="#92969c" fontFamily="Open Sans, sans-serif">LEFT</text>
      <path d="M155 37V156" stroke="#8080ff" strokeWidth="4" />
      <path d="M36 156H156" stroke="#6ee26e" strokeWidth="5" />
      <text x="154" y="32" textAnchor="middle" fontSize="28" fontWeight="700" fill="#9494ff" fontFamily="Open Sans, sans-serif">Z</text>
      <text x="21" y="165" textAnchor="middle" fontSize="28" fontWeight="700" fill="#9cf79c" fontFamily="Open Sans, sans-serif">Y</text>
    </svg>
  );
}

/* ---------- navigation bar ---------- */

const N = "size-8";
const Orbit: IconFn = () => (
  <Svg vb="0 0 32 32" className={N}>
    <path d="M12 12Q2 13 2 17T14 22M21 22Q31 21 31 17T20 12" stroke="#3c4450" strokeWidth="1.800" />
    <path d="M6 20 10 16V24Z" fill="#222" />
    <path d="M13 30V8H10L16.500 1 23 8H19.500V30Z" fill="#e4e6ea" stroke="#3c4450" strokeWidth="1.400" />
  </Svg>
);
const LookAt: IconFn = () => (
  <Svg vb="0 0 32 32" className={N}>
    <path d="M3 11 11 3 10 7 24 5V11Z" fill="#9a9ea8" stroke="#3c4450" strokeWidth="1.300" />
    <rect x="3" y="11" width="27" height="18" rx="1" fill="#f4f5f7" stroke="#3c4450" strokeWidth="1.600" />
    <rect x="7" y="15" width="19" height="10" fill="#b8bcc6" stroke="#3c4450" strokeWidth="1.500" />
  </Svg>
);
const Hand: IconFn = () => (
  <Svg vb="0 0 32 32" className={N}>
    <path d="M11 29 8 22 2 17Q0 14 4 15L10 19 7 8Q6 4 9 5L13 15 14 3Q16 0 18 3L18 14 21 4Q24 2 24 5L22 16 27 9Q31 7 30 11L26 20 24 27 22 30H12Z" fill="#fafafa" stroke="#3c4450" strokeWidth="1.500" strokeLinejoin="round" />
  </Svg>
);
const Lens = ({ cx }: { cx: number }) => (
  <>
    <path d={`M${cx + 8} 19 ${cx + 18} 29`} stroke="#30343c" strokeWidth="4.500" />
    <circle cx={cx} cy="12" r="10.500" fill="#e3f0f0" stroke="#3c4450" strokeWidth="1.600" />
    <path d={`M${cx - 6} 10Q${cx - 4} 5 ${cx} 5`} stroke="#fff" strokeWidth="2.500" />
  </>
);
const Zoom: IconFn = () => (
  <Svg vb="0 0 32 32" className={N}>
    <Lens cx={12} />
    <path d="M24 4H31M27.500 1V8M24 10H31" stroke="#3c4450" strokeWidth="1.500" />
  </Svg>
);
const ZoomWindow: IconFn = () => (
  <Svg vb="0 0 32 32" className={N}>
    <path d="M2 2H30V31H2Z" stroke="#777" strokeWidth="1.300" strokeDasharray="5 2" />
    <Lens cx={12} />
  </Svg>
);
const Monitor: IconFn = () => (
  <Svg vb="0 0 32 32" className={N}>
    <path d="M13 24H19V28L24 30V31H8V30L13 28Z" fill="#c8ccd4" stroke="#3c4450" strokeWidth="1.200" />
    <rect x="1.500" y="1.500" width="29" height="23" fill="#f1f2f5" stroke="#3c4450" strokeWidth="1.500" />
    <rect x="5" y="5" width="22" height="16" fill="#92b5df" stroke="#1e3f78" strokeWidth="1.500" />
  </Svg>
);
const GridIcon: IconFn = () => (
  <Svg vb="0 0 32 32" className={N}>
    <rect x="2" y="2" width="28" height="28" fill="#f4f5f8" />
    <path d="M2 17H30V30H2Z" fill="#c2c9d8" />
    <path d="M6.500 2V30M10.500 2V30M14.500 2V30M18.500 2V30M22.500 2V30M26.500 2V30M2 6.500H30M2 10.500H30M2 14.500H30M2 18.500H30M2 22.500H30M2 26.500H30" stroke="#6c7280" strokeWidth="1" />
    <rect x="2" y="2" width="28" height="28" stroke="#30343c" strokeWidth="1.600" />
  </Svg>
);
const Viewports: IconFn = () => (
  <Svg vb="0 0 32 32" className={N}>
    <rect x="2" y="4" width="28" height="24" fill="#92b5df" stroke="#1e3f78" strokeWidth="1.600" />
    <path d="M16 4V28M2 16H30" stroke="#1e3f78" strokeWidth="1.600" />
    <path d="M5 7H13V13H5ZM19 7H27V13H19ZM5 19H13V25H5ZM19 19H27V25H19Z" stroke="#5d86bd" strokeWidth="1" />
  </Svg>
);

function NavBar() {
  const caret = <Caret className="h-2 w-3 text-[#333]" />;
  return (
    <div role="toolbar" aria-label="Navigation" className="absolute bottom-2 left-1/2 flex h-12 -translate-x-1/2 items-center bg-[#f1f1f1] pr-2 pl-1.5">
      <button aria-label="Orbit" className="mr-3 flex items-center gap-2.5"><Orbit />{caret}</button>
      <button aria-label="Look at" className="mr-5"><LookAt /></button>
      <button aria-label="Pan" className="mr-5"><Hand /></button>
      <button aria-label="Zoom" className="mr-5"><Zoom /></button>
      <button aria-label="Zoom window" className="mr-3 flex items-center gap-2.5"><ZoomWindow />{caret}</button>
      <button aria-label="Display settings" className="mr-3.5 flex items-center gap-1"><Monitor />{caret}</button>
      <button aria-label="Grid and snaps" className="mr-3.5 flex items-center gap-1"><GridIcon />{caret}</button>
      <button aria-label="Viewports" className="flex items-center gap-1"><Viewports />{caret}</button>
    </div>
  );
}

/* ---------- timeline ---------- */

const FEATURES: [string, IconFn][] = [
  ["Sketch", SketchEdit], ["Extrude", Extrude], ["Shell", Shell], ["Extrude", Extrude], ["Base feature", BaseFeature],
  ["Extrude", Extrude], ["Chamfer", Chamfer], ["Shell", Shell], ["Thread", Thread], ["Thread", Thread],
  ["Scale", Scale], ["Chamfer", Chamfer], ["Extrude", Extrude], ["Sketch", SketchEdit], ["Emboss", Emboss],
  ["Sketch", SketchEdit], ["Emboss", Emboss], ["Pattern", CircPattern], ["Sketch", SketchEdit], ["Emboss", Emboss],
  ["Pattern", CircPattern], ["Sketch", SketchEdit], ["Emboss", Emboss], ["Emboss", Emboss], ["Pattern", CircPattern],
  ["Fillet", Fillet], ["Component from body", Convert], ["Move", Move], ["Move", Move], ["Move", Move],
  ["Move", Move], ["Move", Move], ["Move", Move], ["Sketch", SketchEdit], ["Move", Move],
  ["Move", Move], ["Move", Move], ["Move", Move], ["Move", Move], ["Move", Move],
];

const TRANSPORT: [string, string][] = [
  ["Go to start", "M6 2H9V30H6ZM30 2V30L10 16Z"],
  ["Step back", "M24 3V29L4 16ZM26 10H30V22H26Z"],
  ["Play", "M6 0 30 16 6 32Z"],
  ["Step forward", "M10 3V29L30 16ZM4 10H7V22H4Z"],
  ["Go to end", "M6 2V30L26 16ZM27 2H30V30H27Z"],
];

function Timeline() {
  return (
    <footer className="flex h-25 shrink-0 items-start border-t-2 border-[#d6d6d6] bg-[#f1f1f1]">
      <div className="mt-8 mr-[37px] ml-4 flex gap-[18px]">
        {TRANSPORT.map(([name, d]) => (
          <button key={name} aria-label={name}>
            <Svg vb="0 0 32 32" className="size-8">
              <path d={d} fill="#4a4a4c" />
            </Svg>
          </button>
        ))}
      </div>
      <ol className="mt-[30px] flex">
        {FEATURES.map(([name, Icon], i) => (
          <li key={i} className="flex w-12 flex-col items-center">
            <button aria-label={name}>
              <Icon className="size-8" />
            </button>
            <i className="mt-1.5 h-2.5 w-1 bg-[#c9c9c9]" />
            <i className={`h-1 bg-[#c9c9c9] ${i === 0 ? "w-[26px] self-end" : i === FEATURES.length - 1 ? "w-[26px] self-start" : "w-full"}`} />
          </li>
        ))}
      </ol>
      <Svg vb="0 0 24 64" className="mt-[18px] -ml-3 h-16 w-6">
        <path d="M0 0H24V10L14 19V64H10V19L0 10Z" fill="#666" />
      </Svg>
      <button aria-label="Timeline settings" className="mt-8 mr-[26px] ml-auto">
        <Gear />
      </button>
    </footer>
  );
}

/* ---------- ribbon ---------- */

const GROUPS: { name: string; pad: string; items: [string, IconFn][] }[] = [
  { name: "CREATE", pad: "pr-[19px] pl-8", items: [["Create sketch", NewSketch], ["Extrude", Extrude], ["Revolve", Revolve], ["Hole", Hole], ["Rectangular pattern", Pattern], ["Create form", FormTool]] },
  { name: "MODIFY", pad: "pr-[18px] pl-[25px]", items: [["Press pull", PressPull], ["Fillet", Fillet], ["Shell", Shell], ["Combine", Combine], ["Split body", Split], ["Move", Move]] },
  { name: "ASSEMBLE", pad: "pr-5 pl-[22px]", items: [["New component", NewComponent], ["Joint", Joint]] },
  { name: "CONSTRUCT", pad: "px-[30px]", items: [["Offset plane", Construct]] },
  { name: "INSPECT", pad: "px-[26px]", items: [["Measure", Measure]] },
  { name: "INSERT", pad: "px-7", items: [["Insert image", InsertPic]] },
  { name: "SELECT", pad: "px-7", items: [["Select", SelectTool]] },
];

function Ribbon() {
  return (
    <div className="flex h-41 shrink-0 border-b-2 border-[#cfcfcf] bg-[#f1f1f1] text-[22px] text-[#333]">
      <button className="mt-[21px] ml-6 flex h-[122px] w-[218px] items-center justify-center gap-2.5 rounded-lg border-2 border-[#cacaca] pb-0.5 font-semibold">
        DESIGN <Caret />
      </button>
      <div>
        <div role="tablist" className="ml-[35px] flex h-[47px] gap-[39px] text-[23px]">
          {["SOLID", "SURFACE", "MESH", "SHEET METAL", "PLASTIC", "UTILITIES"].map((t, i) => (
            <button
              key={t}
              role="tab"
              aria-selected={i === 0}
              className={
                i === 0
                  ? "border-b-6 border-[#0696d7] px-6 pt-0.5 font-bold text-[#0696d7]"
                  : "border-b-6 border-transparent px-6 pt-0.5"
              }
            >
              {t}
            </button>
          ))}
        </div>
        <div className="mt-1.5 flex h-[102px]">
          {GROUPS.map((g, i) => (
            <div
              key={g.name}
              role="group"
              aria-label={g.name}
              className={`flex flex-col items-center pt-px ${g.pad} ${i === GROUPS.length - 1 ? "" : "border-r-2 border-[#cacaca]"}`}
            >
              <div className="flex h-16 gap-[22px]">
                {g.items.map(([n, Icon]) => (
                  <button key={n} aria-label={n}>
                    <Icon className="size-16" />
                  </button>
                ))}
              </div>
              <button className={`mt-[11px] flex items-center gap-1.5 leading-6 ${i < 2 ? "mr-3" : ""}`}>
                {g.name} <Caret />
              </button>
            </div>
          ))}
        </div>
      </div>
    </div>
  );
}

/* ---------- document tabs ---------- */

const Part = ({ dim }: { dim?: boolean }) => (
  <Svg vb="0 0 32 32" className="size-8">
    <path d="M0 6 16 0 32 6V21L16 32 0 21Z" fill={dim ? "#8a8a8a" : "#606060"} />
    <path d="M1 8 17 13V30L1 20Z" fill={dim ? "#bdbdbd" : "#a8a8a8"} />
    <path d="M0 6 16 0 32 6 17 12Z" fill={dim ? "#909090" : "#666"} />
  </Svg>
);

function DocTab({ title, active }: { title: string; active?: boolean }) {
  return (
    <div className={`flex flex-1 items-center rounded-t-lg pr-3 ${active ? "bg-[#f1f1f1] text-[#333]" : "bg-[#bababa] text-[#666]"}`}>
      <button role="tab" aria-selected={!!active} className="flex flex-1 items-center justify-center gap-2 text-[25px] leading-8">
        <Part dim={!active} />
        {title}
      </button>
      <button aria-label={`Close ${title}`}>
        <Svg vb="0 0 18 18" className="size-[18px]">
          <path d="M1 1 17 17M17 1 1 17" stroke="#777" strokeWidth="2.200" />
        </Svg>
      </button>
    </div>
  );
}

const T = "size-8";

function TabStrip() {
  return (
    <div className="flex h-16 shrink-0 items-stretch border-t border-[#a6a6a6] bg-[#cbcbcb] text-[#666]">
      <div className="flex w-[386px] items-center pb-0.5 pl-4">
        <button aria-label="Data panel">
          <Svg vb="0 0 32 32" className={T}>
            <path d="M2 2h8v8H2zM12 2h8v8h-8zM22 2h8v8h-8zM2 12h8v8H2zM12 12h8v8h-8zM22 12h8v8h-8zM2 22h8v8H2zM12 22h8v8h-8zM22 22h8v8h-8z" fill="#606060" />
          </Svg>
        </button>
        <button aria-label="File" className="ml-[34px] flex items-center gap-2">
          <Svg vb="0 0 32 32" className={T}>
            <path d="M2 0H18V10H28V32H2ZM20 0 28 8H20Z" fill="#606060" />
          </Svg>
          <Caret className="h-2.5 w-3.5 text-[#666]" />
        </button>
        <button aria-label="Save" className="ml-9">
          <Svg vb="0 0 32 32" className={T}>
            <path d="M2 2H28L30 4V30H7L2 25Z" fill="#606060" />
            <path d="M8 3H24V14H8Z" fill="#cbcbcb" />
            <path d="M10 3H21V12H10ZM10 20H22V30H10Z" fill="#606060" />
            <path d="M16 5H19V11H16Z" fill="#cbcbcb" />
            <path d="M9 19H23V30H21V21H11V30H9Z" fill="#cbcbcb" />
            <path d="M16 23H19V30H16Z" fill="#cbcbcb" />
          </Svg>
        </button>
        <button aria-label="Undo" className="ml-[34px] flex items-center gap-2.5">
          <Svg vb="0 0 32 32" className={T}>
            <path d="M14 5 5 14 14 22M5 14H15Q28 14 28 28" stroke="#666" strokeWidth="3.500" />
          </Svg>
          <Caret className="h-2.5 w-3.5 text-[#666]" />
        </button>
        <button aria-label="Redo" className="ml-[22px] flex items-center gap-2.5">
          <Svg vb="0 0 32 32" className={T}>
            <path d="M19 5 28 14 19 22M28 14H18Q5 14 5 28" stroke="#999" strokeWidth="3" />
          </Svg>
          <Caret className="h-2.5 w-3.5 text-[#999]" />
        </button>
      </div>
      <div className="flex flex-1 gap-2 pt-[7px]" role="tablist">
        <DocTab title="practice stl v2" />
        <DocTab title="aartifact v11*" active />
        <button aria-label="New design" className="flex w-14 items-center justify-center rounded-t-lg bg-[#b6b6b6]">
          <Svg vb="0 0 26 26" className="size-[26px]">
            <path d="M13 0V26M0 13H26" stroke="#858585" strokeWidth="5" />
          </Svg>
        </button>
      </div>
      <div className="flex w-[362px] items-center gap-[34px] pb-0.5 pl-6">
        <button aria-label="Extensions">
          <Svg vb="0 0 32 32" className={T}>
            <circle cx="16" cy="16" r="16" fill="#606060" />
            <path d="M8 12Q11 9 15 11L21 17Q24 21 21 25Q17 27 13 24L5 31 1 27 8 20Q6 15 8 12Z" fill="#cfcfcf" />
            <path d="M15 13 21 5M20 19 27 12" stroke="#cfcfcf" strokeWidth="3.500" />
          </Svg>
        </button>
        <button aria-label="Job status">
          <Svg vb="0 0 32 32" className={T}>
            <circle cx="16" cy="16" r="15" stroke="#606060" strokeWidth="2" />
            <circle cx="16" cy="16" r="11.500" fill="#606060" />
            <path d="M16 8V17H24" stroke="#d5d5d5" strokeWidth="2.500" />
          </Svg>
        </button>
        <button aria-label="Notifications">
          <Svg vb="0 0 32 32" className={T}>
            <path d="M16 0Q18 0 18 3Q25 5 25 14Q25 22 30 24V26H2V24Q7 22 7 14Q7 5 14 3Q14 0 16 0ZM12 28H20Q19 32 16 32T12 28Z" fill="#606060" />
            <circle cx="25" cy="8" r="7" fill="#0696d7" stroke="#cbcbcb" strokeWidth="1.500" />
          </Svg>
        </button>
        <button aria-label="Help">
          <Svg vb="0 0 32 32" className={T}>
            <circle cx="16" cy="16" r="16" fill="#606060" />
            <path d="M10 12Q10 7 16 7T22 12Q22 15 18.500 16.500Q16 17.500 16 21" stroke="#dadada" strokeWidth="3.500" />
            <circle cx="16" cy="25" r="2.200" fill="#dadada" />
          </Svg>
        </button>
        <button aria-label="Account" className="ml-1 flex size-[50px] items-center justify-center rounded-full bg-[#ececec] text-2xl text-[#444]">
          RC
        </button>
      </div>
    </div>
  );
}

/* ---------- macOS menu bar ---------- */

function MenuBar() {
  return (
    <div className="flex h-12 shrink-0 items-center bg-linear-to-r from-[#26406a] via-[#1a2148] via-45% to-[#1c1c4c] pr-[38px] pl-[43px] font-[Inter] text-[26px] leading-8 text-white">
      <Svg vb="0 0 28 32" className="mr-11 h-8 w-7">
        <path d="M19 0Q19.500 3 17.500 5.500T13 8Q12.600 5 14.600 2.700T19 0Z" fill="#f0f2f6" />
        <path d="M14 9.500Q16 8 19 8Q23 8 25.500 11.200Q21.500 13.500 22 18Q22.500 22.500 26.500 24Q25 28 22.500 30.500Q20.500 32 18.500 31Q16 30 14 30.500Q12 31 10.500 31.300Q8 31.800 6 29Q2 24 1.500 19Q1 13 4.500 10Q7 8 10 8.500Q12 9.200 14 9.500Z" fill="#f0f2f6" />
      </Svg>
      <nav className="flex gap-[39px]">
        <button className="pr-1 font-bold">Fusion 360</button>
        {["File", "Edit", "View", "Window", "Help"].map((m) => (
          <button key={m} className="font-medium">
            {m}
          </button>
        ))}
      </nav>
      <div className="ml-auto flex items-center">
        <Svg vb="0 0 42 34" className="mr-[37px] h-[34px] w-[42px]">
          <path d="M12 28Q2 28 2 18Q2 9 10 8Q14 1 23 2Q34 3 38 12Q41 18 38 22" stroke="#fff" strokeWidth="2.500" />
          <path d="M22 28H13Q6 27 6 19T13 11Q18 11 22 17L28 25M12 10Q18 4 25 7Q34 11 34 18M18 10Q26 8 30 16" stroke="#fff" strokeWidth="3" />
          <circle cx="32" cy="25" r="9" fill="#e34f26" />
        </Svg>
        <Svg vb="0 0 38 28" className="mr-[38px] mb-1 h-7 w-[38px]">
          <rect x="1.500" y="1.500" width="35" height="25" rx="2" stroke="#e6e6ee" strokeWidth="2.500" />
          <rect x="5.500" y="5.500" width="27" height="17" stroke="#e6e6ee" strokeWidth="2" />
          <path d="M11 5V23M6 9H10M6 13H10" stroke="#e6e6ee" strokeWidth="2" />
        </Svg>
        <Svg vb="0 0 28 28" className="mr-[38px] size-7">
          <circle cx="14" cy="14" r="12.500" stroke="#fff" strokeWidth="2.500" />
          <path d="M10.500 8 20 14 10.500 20Z" fill="#fff" />
        </Svg>
        <Svg vb="0 0 24 28" className="mr-[34px] h-7 w-6">
          <path d="M5 8 18 20 12 26V2L18 8 5 20" stroke="#7d7da0" strokeWidth="2" />
          <path d="M2 5 22 25" stroke="#fff" strokeWidth="2" />
        </Svg>
        <Svg vb="0 0 52 24" className="mr-[34px] h-6 w-[52px]">
          <rect x="1" y="1" width="45" height="22" rx="6" stroke="#8c8cab" strokeWidth="2" />
          <rect x="4" y="4" width="34" height="16" rx="4" fill="#fff" />
          <path d="M48 8Q52 12 48 16Z" fill="#8c8cab" />
        </Svg>
        <Svg vb="0 0 26 26" className="mr-[38px] size-[26px]">
          <circle cx="11" cy="11" r="9" stroke="#fff" strokeWidth="2.800" />
          <path d="M17 17 25 25" stroke="#fff" strokeWidth="3" />
        </Svg>
        <Svg vb="0 0 34 24" className="mr-9 h-6 w-[34px]">
          <path d="M2 9Q17 -5 32 9M7.500 14.500Q17 6 26.500 14.500" stroke="#fff" strokeWidth="3.500" />
          <path d="M11 17.500Q17 12.500 23 17.500L17 24Z" fill="#fff" />
        </Svg>
        <Svg vb="0 0 30 28" className="mr-[34px] h-7 w-[30px]">
          <rect x="2" y="1.500" width="26" height="11" rx="5.500" stroke="#fff" strokeWidth="2.500" />
          <circle cx="7.500" cy="7" r="4" fill="#fff" />
          <rect x="1" y="15" width="28" height="13" rx="6.500" fill="#fff" />
          <circle cx="22" cy="21.500" r="4" fill="#1c1c4c" />
        </Svg>
        <Svg vb="0 0 28 28" className="mr-8 size-7">
          <defs>
            <linearGradient id="siri" x1="0" x2="1" y1="1" y2="0">
              <stop offset="0" stopColor="#2fb4d8" />
              <stop offset="0.500" stopColor="#4a3a86" />
              <stop offset="1" stopColor="#d84a7c" />
            </linearGradient>
          </defs>
          <circle cx="14" cy="14" r="14" fill="url(#siri)" />
          <path d="M4 15Q11 13 12 4Q15 11 24 10Q17 14 21 23Q15 18 9 24Q11 17 4 15Z" fill="#e9f6fb" opacity="0.850" />
        </Svg>
        <time className="font-medium whitespace-pre">Mon May 23  1:33 PM</time>
      </div>
    </div>
  );
}

export default function App() {
  return (
    <div className="flex h-screen flex-col overflow-hidden bg-[#1c1b22] font-['Open_Sans',sans-serif]">
      <MenuBar />
      <div className="relative flex min-h-0 flex-1 bg-linear-to-b from-[#2a2058] to-[#1d1d22] pt-0.5 pr-1 pb-1">
        <i className="absolute right-0 bottom-44 h-9 w-1 bg-[#5cb85c]" />
        <main className="flex min-w-0 flex-1 flex-col overflow-hidden rounded-[20px] bg-white">
          <header className="relative flex h-14 shrink-0 items-center justify-center bg-[#f2f0f3]">
            <div className="absolute left-4 flex gap-4">
              <button aria-label="Close" className="size-6 rounded-full border border-[#d6554a] bg-[#ed6a5e]" />
              <button aria-label="Minimize" className="size-6 rounded-full border border-[#dda43c] bg-[#f5bf4f]" />
              <button aria-label="Full screen" className="size-6 rounded-full border border-[#52a93f] bg-[#61c554]" />
            </div>
            <h1 className="font-[Inter] text-[26px] font-bold text-[#444]">Autodesk Fusion 360 (Education License)</h1>
          </header>
          <TabStrip />
          <Ribbon />
          <div className="relative min-h-0 flex-1 bg-white">
            <Model />
            <Browser />
            <ViewCube />
            <NavBar />
          </div>
          <Timeline />
        </main>
      </div>
    </div>
  );
}
